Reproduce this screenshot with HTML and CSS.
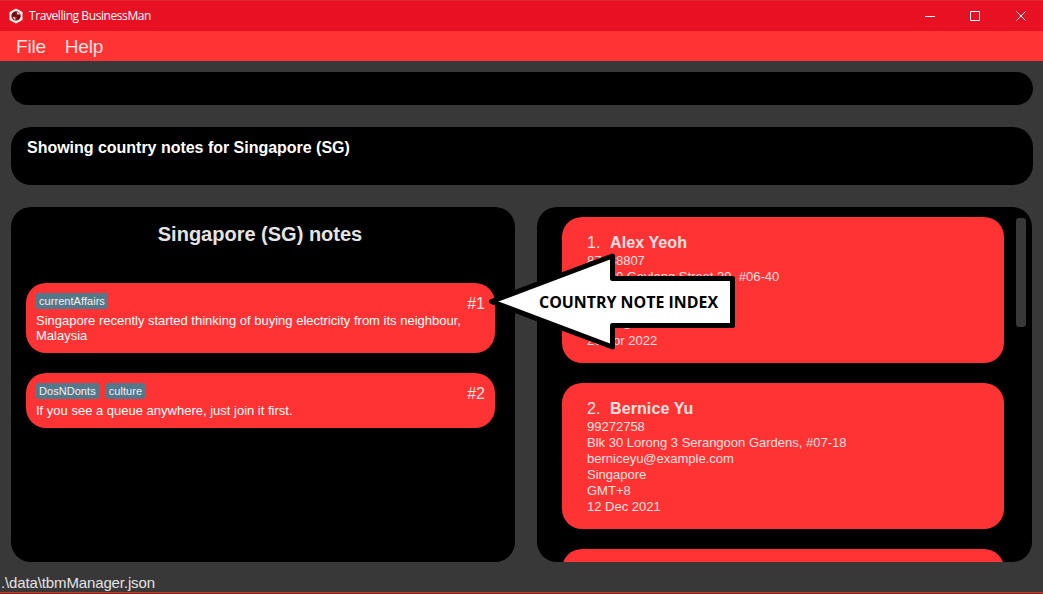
FILE: index.html
```html
<!DOCTYPE html>
<html lang="en">
<head>
<meta charset="utf-8">
<title>Travelling BusinessMan</title>
<link rel="stylesheet" href="styles.css">
</head>
<body>
<div class="window">
  <header class="titlebar">
    <svg class="app-icon" width="14" height="16" viewBox="0 0 14 16"><path d="M7 .5 13.500 4v8L7 15.500.5 12V4z" fill="#fff3ea"/><circle cx="7" cy="8" r="4.700" fill="#8c1420"/><path d="M3 5.500 5 4l2.200.6.3 1.400-1.500 2-2 .2zM8 7.200l2.600-.2.8 1.500-2 3-1.400-1.500z" fill="#5c0c14"/><path d="M7.800 4l2.400 1 .8 1.300-2.800.2zM3.600 9l2.400.2.8 2.200-1.400.2z" fill="#f6ded6"/></svg>
    <span class="app-title">Travelling BusinessMan</span>
    <svg class="controls" width="100" height="10" viewBox="0 0 100 10" fill="none" stroke="#fff"><path d="M0 5.500h10"/><path d="M45.500 .5h9v9h-9z"/><path d="M91.500 .5l9 9m0-9l-9 9"/></svg>
  </header>
  <nav class="menubar"><span>File</span><span>Help</span></nav>
  <main class="content">
    <div class="panel command"></div>
    <div class="panel result">Showing country notes for Singapore (SG)</div>
    <div class="columns">
      <section class="panel notes">
        <h1>Singapore (SG) notes</h1>
        <article class="card note">
          <div class="note-body">
            <div class="tags"><span>currentAffairs</span></div>
            <p>Singapore recently started thinking of buying electricity from its neighbour,<br>Malaysia</p>
          </div>
          <span class="index">#1</span>
        </article>
        <article class="card note">
          <div class="note-body">
            <div class="tags"><span>DosNDonts</span><span>culture</span></div>
            <p>If you see a queue anywhere, just join it first.</p>
          </div>
          <span class="index">#2</span>
        </article>
      </section>
      <section class="panel people">
        <div class="list">
          <article class="card person">
            <h2><span class="num">1.</span>Alex Yeoh</h2>
            <p>87438807</p><p>Blk 30 Geylang Street 29, #06-40</p><p>alexyeoh@example.com</p><p>Singapore</p><p>GMT+8</p><p>20 Apr 2022</p>
          </article>
          <article class="card person">
            <h2><span class="num">2.</span>Bernice Yu</h2>
            <p>99272758</p><p>Blk 30 Lorong 3 Serangoon Gardens, #07-18</p><p>berniceyu@example.com</p><p>Singapore</p><p>GMT+8</p><p>12 Dec 2021</p>
          </article>
          <article class="card person"></article>
        </div>
        <div class="thumb"></div>
      </section>
    </div>
  </main>
  <footer class="statusbar">.\data\tbmManager.json</footer>
  <div class="desktop-edge"></div>
  <svg class="callout" width="250" height="102" viewBox="0 0 250 102"><path d="M5.500 50.500 126.500 5v22.500h120v47h-120V96z" fill="#fff" stroke="#000" stroke-width="5" stroke-linejoin="round"/><text class="callout-text" x="53" y="57" textLength="179" lengthAdjust="spacingAndGlyphs">COUNTRY NOTE INDEX</text></svg>
</div>
</body>
</html>
```
FILE: styles.css
```css
* { box-sizing: border-box; }
body { margin: 0; overflow: hidden; font-family: "Liberation Sans", Arial, sans-serif; }
h1, h2, p { margin: 0; }
.window { position: relative; width: 1043px; height: 594px; display: flex; flex-direction: column; overflow: hidden; background: #383838; }
.titlebar { height: 31px; flex: none; display: flex; align-items: center; padding: 0 18px 0 9px; background: #e81123; border-top: 1px solid #e32636; }
.app-title { margin-left: 6px; color: #fff; font: 12px/16px "Open Sans", sans-serif; letter-spacing: -0.42px; }
.controls { margin-left: auto; overflow: visible; }
.menubar { height: 30px; flex: none; display: flex; gap: 19px; padding: 5px 16px 0; background: #ff3333; color: #ffe1e1; font-size: 19px; line-height: 22px; letter-spacing: -0.2px; }
.content { flex: none; height: 501px; padding: 11px 10px 0 11px; }
.panel { background: #000; border-radius: 20px; }
.command { height: 33px; border-radius: 16.5px; }
.result { height: 58px; margin-top: 22px; padding: 11px 16px; color: #fff; font-weight: bold; font-size: 16px; line-height: 19px; letter-spacing: -0.02px; }
.columns { display: flex; gap: 22px; margin-top: 22px; height: 355px; }
.notes { width: 504px; padding: 14px 20px 0 15px; }
.notes h1 { height: 62px; margin-left: -1px; text-align: center; color: #e4e4e4; font-size: 20px; line-height: 26px; }
.card { background: #ff3333; border-radius: 20px; }
.note { display: flex; justify-content: space-between; padding: 10px; margin-bottom: 20px; }
.note p { margin-top: 4px; color: #fff; font-size: 13px; line-height: 15px; white-space: nowrap; }
.tags { display: flex; gap: 7px; }
.tags span { height: 16px; padding: 1px 3px; background: #54788a; border-radius: 2px; color: #f5eeee; font-size: 11px; line-height: 14px; letter-spacing: 0.05px; }
.index { color: #ffe1e1; font-size: 16px; line-height: 22px; }
.people { width: 495px; display: flex; justify-content: space-between; padding: 10px 6px 0 25px; overflow: hidden; }
.list { width: 442px; height: 345px; overflow: hidden; }
.person { height: 146px; margin-bottom: 20px; padding: 16px 25px; color: #ffe1e1; font-size: 13px; line-height: 16px; }
.person h2 { height: 20px; font-size: 16px; line-height: 19px; letter-spacing: 0.1px; }
.num { display: inline-block; width: 23px; font-weight: normal; }
.thumb { width: 10px; height: 109px; margin-top: 1px; border-radius: 3px; background: #383838; }
.statusbar { flex: none; height: 30px; padding: 12px 1px 0; color: #e4e4e4; font-size: 15px; line-height: 17px; letter-spacing: -0.13px; }
.desktop-edge { flex: none; height: 2px; background: #46441a; border-top: 1px solid #ff1a2c; }
.callout { position: absolute; left: 486px; top: 251px; }
.callout-text { font: bold 16px "Open Sans", sans-serif; }
```
